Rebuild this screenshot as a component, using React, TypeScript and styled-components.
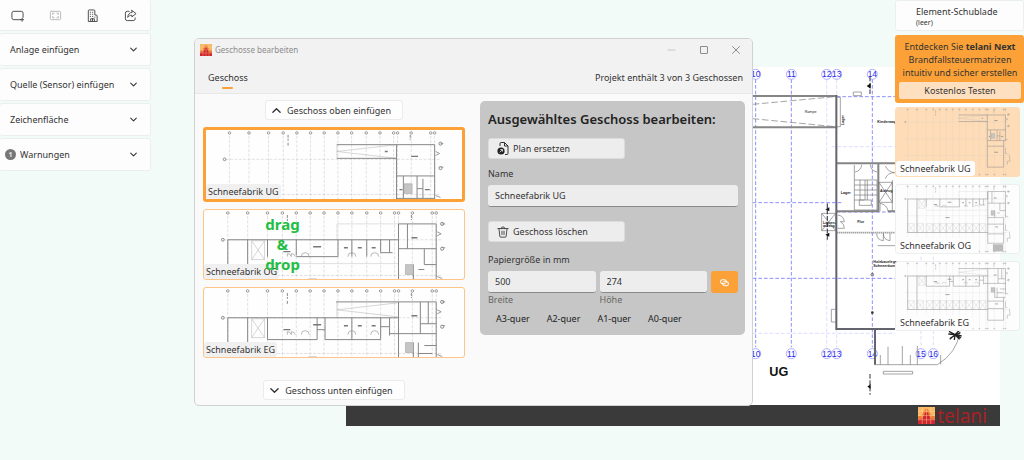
import React from "react";
import styled, { createGlobalStyle, css } from "styled-components";

const accent = "#fba137";

const GlobalStyle = createGlobalStyle`
  * { box-sizing: border-box; }
  body {
    margin: 0;
    background: #f2fbf8;
    color: #333;
    font: 9px/13px "Noto Sans", "Open Sans", sans-serif;
  }
  button, input { font: inherit; color: inherit; margin: 0; }
  button { border: 0; background: none; padding: 0; }
  svg { display: block; flex: none; }
`;

const Workspace = styled.div`
  position: relative;
  display: flex;
  justify-content: space-between;
  align-items: flex-start;
  min-height: 100vh;
  overflow: hidden;
`;

const surface = css`
  background: #fdfdfd;
  border: 1px solid #ebf0ee;
  border-radius: 3px;
`;

/* Left column */

const Sidebar = styled.nav`
  display: flex;
  flex-direction: column;
  gap: 2px;
  width: 151px;
  flex: none;
`;

const ToolRow = styled.div`
  ${surface}
  border-top: 0;
  border-left: 0;
  display: flex;
  justify-content: space-between;
  align-items: center;
  height: 31px;
  padding: 0 13px 0 11px;
`;

const ToolButton = styled.button`
  display: flex;
  color: #444;
  &:disabled { color: #b5b5b5; }
`;

const Section = styled.button<{ $flagged?: boolean }>`
  ${surface}
  border-left: 0;
  display: flex;
  align-items: center;
  gap: 4px;
  height: 33px;
  padding: 0 13px 0 ${(p) => (p.$flagged ? 5 : 10)}px;
  text-align: left;
  span { flex: 1; }
`;

const Count = styled.b`
  width: 11px;
  height: 11px;
  border-radius: 50%;
  background: #777;
  color: #e8e8e8;
  font-size: 7px;
  line-height: 11px;
  text-align: center;
`;

/* Plan sheet behind the windows */

const Sheet = styled.section`
  position: absolute;
  top: 67px;
  left: 346px;
  right: 24px;
  background: #fff;
  svg.plan { width: 100%; height: 338px; }
`;

const SheetFooter = styled.footer`
  display: flex;
  align-items: center;
  justify-content: flex-end;
  gap: 2px;
  height: 21px;
  padding-right: 13px;
  background: #3a3a3a;
  color: #ab2024;
  font-size: 19px;
  line-height: 20px;
`;

/* Right column */

const Drawer = styled.aside`
  position: relative;
  width: 129px;
  flex: none;
  display: flex;
  flex-direction: column;
`;

const DrawerHead = styled.header`
  ${surface}
  height: 31px;
  padding: 4px 0 0 20px;
  small { display: block; font-size: 7px; line-height: 10px; }
`;

const Promo = styled.section`
  margin-top: 4px;
  height: 68px;
  padding: 5px 3px 4px 4px;
  border-radius: 3px;
  background: ${accent};
  text-align: center;
  p { margin: 0 0 3px; }
`;

const PromoButton = styled.button`
  width: 100%;
  height: 17px;
  border-radius: 2px;
  background: #fee0c1;
`;

const DrawerList = styled.div`
  display: flex;
  flex-direction: column;
  gap: 7px;
  padding: 4px 4px 0 0;
`;

const Preview = styled.button<{ $active?: boolean }>`
  ${surface}
  position: relative;
  height: 70px;
  overflow: hidden;
  text-align: left;
  ${(p) => p.$active && css`background: #fddcb7; border-color: #fddcb7;`}
  svg { width: 100%; height: 100%; }
`;

const Tag = styled.span<{ $tone: string; $inset: number }>`
  position: absolute;
  left: 0;
  bottom: 0;
  padding: 0 ${(p) => p.$inset}px;
  border-radius: 3px;
  background: ${(p) => p.$tone};
  line-height: 15px;
`;

/* Dialog */

const Dialog = styled.section`
  position: absolute;
  top: 38px;
  left: 194px;
  right: 271px;
  border: 1px solid #cfd2d1;
  border-radius: 5px;
  background: #fafafa;
  overflow: hidden;
`;

const DialogHead = styled.header`
  height: 55px;
  background: #f2f2f2;
  border-bottom: 1px solid #e8e8e8;
`;

const TitleBar = styled.div`
  display: flex;
  align-items: center;
  gap: 3px;
  height: 21px;
  padding: 0 11px 0 5px;
  color: #8c8c8c;
  font-size: 8px;
`;

const WindowButtons = styled.div`
  display: flex;
  gap: 22px;
  margin-left: auto;
`;

const TabRow = styled.div`
  display: flex;
  justify-content: space-between;
  padding: 11px 9px 0 13px;
`;

const Tab = styled.button`
  display: flex;
  flex-direction: column;
  align-items: center;
  gap: 3px;
  &::after {
    content: "";
    width: 11px;
    height: 2px;
    border-radius: 1px;
    background: ${accent};
  }
`;

const DialogBody = styled.div`
  display: flex;
  align-items: flex-start;
  gap: 15px;
  padding: 6px 7px 5px 8px;
`;

const Floors = styled.div`
  width: 262px;
  flex: none;
  display: flex;
  flex-direction: column;
  align-items: center;
  gap: 7px;
`;

const InsertButton = styled.button<{ $last?: boolean }>`
  display: flex;
  align-items: center;
  gap: 6px;
  height: 20px;
  margin-top: ${(p) => (p.$last ? 15 : 0)}px;
  padding: 0 11px 0 6px;
  border: 1px solid #ebebeb;
  border-radius: 3px;
  background: #fefefe;
`;

const FloorCard = styled.button<{ $active?: boolean }>`
  position: relative;
  width: 100%;
  height: ${(p) => (p.$active ? 75 : 71)}px;
  border: ${(p) => (p.$active ? 3 : 1)}px solid ${(p) => (p.$active ? accent : "#fdc587")};
  border-radius: 3px;
  background: #fefefe;
  text-align: left;
  svg { width: 100%; height: 100%; }
`;

const DragHint = styled.strong`
  position: absolute;
  top: 4px;
  left: 0;
  width: 157px;
  color: #1fbf43;
  font-size: 15px;
  line-height: 20px;
  text-align: center;
`;

const Editor = styled.form`
  flex: 1;
  min-width: 0;
  display: flex;
  flex-direction: column;
  align-items: flex-start;
  margin-top: 1px;
  height: 234px;
  padding: 8px 7px 0 8px;
  border-radius: 5px;
  background: #c6c6c6;
  h2 { margin: 0 0 9px; font-size: 13px; line-height: 20px; font-weight: 600; color: #222; }
`;

const ActionButton = styled.button`
  display: flex;
  align-items: center;
  gap: 4px;
  width: 137px;
  height: 21px;
  padding-left: 8px;
  border: 1px solid #dcdcdc;
  border-radius: 3px;
  background: #ededed;
`;

const Label = styled.label`
  margin: 8px 0 5px;
`;

const TextBox = styled.input`
  width: 100%;
  min-width: 0;
  height: 22px;
  padding: 0 7px;
  border: 0;
  border-bottom: 1px solid #8a8a8a;
  border-radius: 3px;
  background: #ededed;
  outline: 0;
`;

const Group = styled.div`
  padding-top: 14px;
  margin-bottom: 3px;
`;

const SizeRow = styled.div`
  display: grid;
  grid-template-columns: 1fr 1fr 27px;
  column-gap: 4px;
  width: 100%;
  label { color: #666; line-height: 14px; }
`;

const LinkButton = styled.button`
  display: flex;
  align-items: center;
  justify-content: center;
  height: 22px;
  border-radius: 3px;
  background: ${accent};
  color: #fff;
`;

const Formats = styled.div`
  display: flex;
  button { padding: 5px 9px 3px 8px; color: #222; }
`;

/* Drawings */

const Stroke = ({ size = 13, d, width = 1, viewBox = "0 0 14 14" }: { size?: number; d: string; width?: number; viewBox?: string }) => (
  <svg width={size} height={size} viewBox={viewBox} fill="none" stroke="currentColor" strokeWidth={width} strokeLinecap="round" strokeLinejoin="round" aria-hidden>
    <path d={d} />
  </svg>
);

const Chevron = ({ up, size = 7 }: { up?: boolean; size?: number }) => (
  <Stroke size={size} viewBox="0 0 10 10" width={1.5} d={up ? "M1 7l4-4 4 4" : "M1 3l4 4 4-4"} />
);

const Logo = ({ size }: { size: number }) => (
  <svg width={size} height={size} viewBox="0 0 16 16" aria-hidden>
    <rect width="16" height="16" fill="#f7b765" />
    <path d="M0 16V9l3-1 3-5 2-2 2 2 3 5 3 1v7z" fill="#ee7a35" />
    <path d="M0 16v-4l4-1 3-6h2l3 6 4 1v4z" fill="#cf2630" />
    <path d="M0 4h16M0 8h16M0 12h16M4 0v16M8 0v16M12 0v16" stroke="#ffe3a0" strokeWidth=".6" opacity=".65" />
  </svg>
);

const gridX = [24, 44, 64, 79, 93, 107, 121, 135, 149, 164, 178, 192, 196, 210, 230, 234];
const bays = [24, 44, 64, 79, 93, 107, 121, 135, 149, 164, 178, 192];

const crosses = bays.slice(0, -1).map((x, i) => {
  const r = Math.min(bays[i + 1], x + 14);
  return `M${x} 83H${r}V102H${x}zM${x} 83L${r} 102M${r} 83L${x} 102`;
}).join("");

const walls = {
  UG: "M134 15H234M134 29H195M195 15V127H230V70M234 15V71M195 47H234M202 47V70M216 47V70M195 70H234M222 50V70M216 60H222M195 82H230",
  OG: "M24 30H196V14H234V70M24 30V102H196M44 30V102M64 30V47M93 30V46M93 47H135M135 30V47M149 30V47M164 30V47M178 30V43M178 43H190M187 30V43M196 14V125H230V70H196M205 14V39M196 39H234M222 39V55H234M211 55V70M216 60H222M196 84H230M196 105H230",
  EG: "M133 14H196M24 30H196M24 30V102H196M44 30V102M64 30V52H93M93 52H114V30M122 30V52H178V30M114 42H122M149 30V52M178 39H187V30M187 46H196M187 39V48M196 14H234V70M196 14V125H230V76M196 46H234M218 14V46M218 36H234M226 14V36M211 55V76H234M216 55V76M222 58H234M216 66H230M196 84H230M196 100H230",
};

type Floor = keyof typeof walls;

const FloorDrawing = ({ floor, crop }: { floor: Floor; crop?: boolean }) => (
  <svg viewBox="0 0 262 146" preserveAspectRatio={crop ? "xMidYMin slice" : "xMidYMin meet"} fill="none" aria-hidden>
    <path d={gridX.map((x) => `M${x} 6V140`).join("") + "M20 30H240M20 66H240M20 102H240"} stroke="#ccc" strokeWidth=".6" strokeDasharray="3 1.5" />
    {gridX.map((x) => (
      <g key={x} stroke="#999">
        <circle cx={x} cy="3" r="1.3" />
        <circle cx={x} cy="143" r="1" />
      </g>
    ))}
    <path d="M84 5v6m0 2v3M209 5v5" stroke="#888" strokeDasharray="3 1" />
    {floor !== "OG" && <path d="M134 14V29M134 22L195 15M134 22L195 29" stroke="#bbb" strokeWidth=".6" />}
    {floor === "OG" && <path d="M134 30V14H196M64 54H196" stroke="#ccc" strokeWidth=".6" />}
    <path d={walls[floor]} stroke="#858585" strokeWidth="1" />
    {floor !== "UG" && <path d={crosses + "M48 31H61V50H48zM48 31L61 50M61 31L48 50"} stroke="#bbb" strokeWidth=".6" />}
    {floor !== "UG" && <path d="M84 47v-3a4 4 0 0 1 4 3v-3a4 4 0 0 1 4 3M98 47a4 4 0 0 1 4-4 4 4 0 0 1 4 4M145 47a4 4 0 0 1 4-4 4 4 0 0 1 4 4M168 47a4 4 0 0 1 4-4 4 4 0 0 1 4 4" stroke="#999" strokeWidth=".7" />}
    <path d="M203 55h8v10h-8z" fill="#c5c5c5" stroke="#999" strokeWidth=".5" />
    {floor === "OG" && <path d="M207 127h22v16h-22z" fill="#bbb" />}
    <path d={floor === "UG" ? "M210 27h7M183 22h3M198 61h3M224 61h5M210 95h8" : "M80 42h7M110 37h8M141 38h4M155 38h4M169 38h4M209 28h6M105 70h9M212 90h6"} stroke="#777" strokeWidth="1.4" />
    <path d="M235 22l4 2-4 2M240 14h3M240 38h3M235 67l5 2M234 85v12l4 1M242 100l2 14h-6v8" stroke="#999" />
    <circle cx="240" cy="14" r="1.6" stroke="#888" />
    <circle cx="240" cy="39" r="1.6" stroke="#888" />
    <circle cx="19" cy="30" r="1.4" stroke="#888" />
  </svg>
);

const axes: [number, string][] = [[47, "10"], [154, "11"], [260, "12"], [290, "13"], [397, "14"]];
const lowerAxes: [number, string][] = [...axes, [543, "15"], [580, "16"]];

const Axis = ({ x, y, name }: { x: number; y: number; name: string }) => (
  <g>
    <circle cx={x} cy={y} r="15" fill="#fff" stroke="#8a8aff" strokeWidth="2" />
    <text x={x} y={y + 9} textAnchor="middle" fontSize="25" fill="#2929ec">{name}</text>
  </g>
);

const SitePlan = () => (
  <svg className="plan" viewBox="-1182 21 1962 1014" preserveAspectRatio="xMaxYMin meet" fill="none" fontFamily="Liberation Sans, Arial, sans-serif" role="img" aria-label="Grundriss UG">
    <g stroke="#8f8fff" strokeWidth="3" strokeDasharray="11 6">
      <path d="M47 58V862M154 58V862M397 58V862M38 428H308M38 655H465M290 110H465M290 456H465" />
      <path d="M260 58V862M290 58V862M543 590V862M580 590V862M275 260H465M38 820H465" strokeWidth="1.5" opacity=".6" />
    </g>
    {axes.map(([x, name]) => <Axis key={name} x={x} y={43} name={name} />)}
    {lowerAxes.map(([x, name]) => <Axis key={name} x={x} y={881} name={name} />)}
    <g stroke="#858585" strokeWidth="6">
      <path d="M38 108H292M38 202H292M290 310H465M290 454H417M415 312V455M444 454H465" />
    </g>
    <path d="M289 105V807H465M405 807V914" stroke="#64646f" strokeWidth="6" />
    <path d="M290 518H465" stroke="#777" strokeWidth="5" strokeDasharray="3 3" />
    <path d="M38 133L285 110M38 176L285 200" stroke="#777" strokeWidth="2" strokeDasharray="20 8" />
    <g stroke="#777" strokeWidth="2">
      <path d="M293 112h8v88h-8M340 96h24v11h-24zM343 315V450H411V360H343M343 375h68M343 390h68M343 405h68M343 420h30M360 360v60M375 360v60M382 360v60M358 420h36v16h-36zM345 336q18-3 20-22M411 336q-18-3-20-22" />
      <path d="M417 367h40v60h-40zM417 367l40 60M457 367l-40 60M457 360v92M420 454v-24q22 4 24 24M436 318q8 18 28 20-22 0-28 18" />
      <path d="M245 460h42v52h-42zM245 460l42 52M287 460l-42 52M293 465q18 2 20 20h-12q12 6 12 20h-20M410 520q0 20 20 22v-22q0 20 20 22v-22M413 557h52" />
      <path d="M288 748h-14v38h14M404 914H592M592 914Q650 880 660 815M421 885v29M444 860v54M487 858v56M511 885v29M532 858v56M602 885v28M430 934h88v8h-88z" />
    </g>
    <path d="M390 50v55M262 430v110M390 942v62" stroke="#333" strokeWidth="3" strokeDasharray="14 5" />
    <path d="M380 78l12-8v16zM256 448l12-6v12zM256 524l12-6v12zM382 980l10-8v14z" fill="#111" />
    <path d="M645 824l-20-2m20 2l-16 14m16-14l-2 16m2-16l14 14m-14-14l20 4m-20-4l12-12m-30 2l36 20m-32 0l30-16" stroke="#222" strokeWidth="4" />
    <circle cx="397" cy="644" r="4" stroke="#333" strokeWidth="2" />
    <circle cx="397" cy="758" r="4" fill="#333" />
    <g fill="#222" fontSize="11" fontWeight="700">
      <text x="412" y="188">Kinderwagen</text>
      <text x="302" y="402">Lager</text>
      <text x="420" y="397">Aufzug</text>
      <text x="249" y="491">Lasten-</text>
      <text x="249" y="502">aufzug</text>
      <text x="352" y="490">Flur</text>
      <text x="194" y="160" fontWeight="400">Rampe</text>
      <text x="400" y="609">Holzbauelegen</text>
      <text x="400" y="620">Schneeräume</text>
      <text transform="translate(311 195) rotate(-90)">Lager</text>
    </g>
    <text x="88" y="948" fontSize="38" fontWeight="700" fill="#111">UG</text>
  </svg>
);

const floorKeys: Floor[] = ["UG", "OG", "EG"];

export default function App() {
  return (
    <>
      <GlobalStyle />
      <Workspace>
        <Sheet>
          <SitePlan />
          <SheetFooter><Logo size={17} />telani</SheetFooter>
        </Sheet>

        <Sidebar>
          <ToolRow>
            <ToolButton aria-label="Neues Element"><Stroke d="M10.500 11.500H3a2 2 0 0 1-2-2V4.500a2 2 0 0 1 2-2h8a2 2 0 0 1 2 2V9M12 9.800v3.400M10.300 11.500h3.400" /></ToolButton>
            <ToolButton aria-label="Rahmen" disabled><Stroke d="M2.500 2.500h9a1 1 0 0 1 1 1v7a1 1 0 0 1-1 1h-9a1 1 0 0 1-1-1v-7a1 1 0 0 1 1-1zM4 6V4.500h1.500M8.500 4.500H10V6M10 8v1.500H8.500M5.500 9.500H4V8" /></ToolButton>
            <ToolButton aria-label="Geschosse"><Stroke d="M2.500 13V2a1 1 0 0 1 1-1h5a1 1 0 0 1 1 1v4.500h1.500a1 1 0 0 1 1 1V13zM4.600 3.500h.3M7 3.500h.3M4.600 5.700h.3M7 5.700h.3M4.600 8h.3M7 8h.3M9.400 8.800h.3M5 13v-2.500h4V13M7 10.500V13" /></ToolButton>
            <ToolButton aria-label="Teilen"><Stroke d="M5.500 2.500h-2a2 2 0 0 0-2 2v6a2 2 0 0 0 2 2h6.500a2 2 0 0 0 2-2v-1M8.500 1.500L13 5 8.500 8.500V6.700C6.500 6.700 5.200 7.500 4 9c.2-3 1.800-5.200 4.500-5.500z" /></ToolButton>
          </ToolRow>
          <Section><span>Anlage einfügen</span><Chevron /></Section>
          <Section><span>Quelle (Sensor) einfügen</span><Chevron /></Section>
          <Section><span>Zeichenfläche</span><Chevron /></Section>
          <Section $flagged><Count>1</Count><span>Warnungen</span><Chevron /></Section>
        </Sidebar>

        <Drawer>
          <DrawerHead>Element-Schublade<small>(leer)</small></DrawerHead>
          <Promo>
            <p>Entdecken Sie <b>telani Next</b><br />Brandfallsteuermatrizen<br />intuitiv und sicher erstellen</p>
            <PromoButton>Kostenlos Testen</PromoButton>
          </Promo>
          <DrawerList>
            {floorKeys.map((floor) => (
              <Preview key={floor} $active={floor === "UG"}>
                <FloorDrawing floor={floor} />
                <Tag $tone="#fdfdfd" $inset={4}>Schneefabrik {floor}</Tag>
              </Preview>
            ))}
          </DrawerList>
        </Drawer>

        <Dialog role="dialog" aria-label="Geschosse bearbeiten">
          <DialogHead>
            <TitleBar>
              <Logo size={12} />
              Geschosse bearbeiten
              <WindowButtons>
                <button aria-label="Minimieren"><Stroke size={10} viewBox="0 0 10 10" width={0.4} d="M1 5h7" /></button>
                <button aria-label="Maximieren"><Stroke size={10} viewBox="0 0 10 10" d="M2 1.500h6a.5.5 0 0 1 .5.5v6a.5.5 0 0 1-.5.5H2a.5.5 0 0 1-.5-.5V2a.5.5 0 0 1 .5-.5z" /></button>
                <button aria-label="Schließen"><Stroke size={10} viewBox="0 0 10 10" d="M1.500 1.500l7 7M8.500 1.500l-7 7" /></button>
              </WindowButtons>
            </TitleBar>
            <TabRow>
              <Tab>Geschoss</Tab>
              <span>Projekt enthält 3 von 3 Geschossen</span>
            </TabRow>
          </DialogHead>
          <DialogBody>
            <Floors>
              <InsertButton><Chevron up size={9} />Geschoss oben einfügen</InsertButton>
              {floorKeys.map((floor) => (
                <FloorCard key={floor} $active={floor === "UG"}>
                  <FloorDrawing floor={floor} crop />
                  <Tag $tone="#f0f0f0" $inset={2}>Schneefabrik {floor}</Tag>
                  {floor === "OG" && <DragHint>drag<br />&amp;<br />drop</DragHint>}
                </FloorCard>
              ))}
              <InsertButton $last><Chevron size={9} />Geschoss unten einfügen</InsertButton>
            </Floors>
            <Editor onSubmit={(e) => e.preventDefault()}>
              <h2>Ausgewähltes Geschoss bearbeiten:</h2>
              <ActionButton type="button">
                <svg width="12" height="13" viewBox="0 0 12 13" fill="none" stroke="#333" aria-hidden>
                  <path d="M3 4V1.500a1 1 0 0 1 1-1h3.500l3.500 3.500v7.500a1 1 0 0 1-1 1H8M7.500.5V4H11" />
                  <circle cx="4" cy="9" r="3.600" fill="#222" stroke="none" />
                  <path d="M2.600 10.400l2.800-2.800M3.300 7.500h2.200v2.200" stroke="#eee" strokeWidth=".8" />
                </svg>
                Plan ersetzen
              </ActionButton>
              <Label htmlFor="name">Name</Label>
              <TextBox id="name" defaultValue="Schneefabrik UG" />
              <Group>
                <ActionButton type="button">
                  <Stroke size={12} d="M1 3h12M5 3a2 2 0 0 1 4 0M2.300 3l1 9a1 1 0 0 0 1 1h5.400a1 1 0 0 0 1-1l1-9M5.800 6v4M8.200 6v4" />
                  Geschoss löschen
                </ActionButton>
              </Group>
              <Label as="span">Papiergröße in mm</Label>
              <SizeRow>
                <TextBox id="width" defaultValue="500" />
                <TextBox id="height" defaultValue="274" />
                <LinkButton type="button" aria-label="Seitenverhältnis koppeln">
                  <Stroke size={11} width={1.3} d="M8 8.500H4.500a2.500 2.500 0 0 1 0-5H7a2.500 2.500 0 0 1 2.300 3.300M6 6h3.500a2.500 2.500 0 0 1 0 5H7a2.500 2.500 0 0 1-2.300-3.300" />
                </LinkButton>
                <label htmlFor="width">Breite</label>
                <label htmlFor="height">Höhe</label>
              </SizeRow>
              <Formats>
                {["A3-quer", "A2-quer", "A1-quer", "A0-quer"].map((name) => <button type="button" key={name}>{name}</button>)}
              </Formats>
            </Editor>
          </DialogBody>
        </Dialog>
      </Workspace>
    </>
  );
}
